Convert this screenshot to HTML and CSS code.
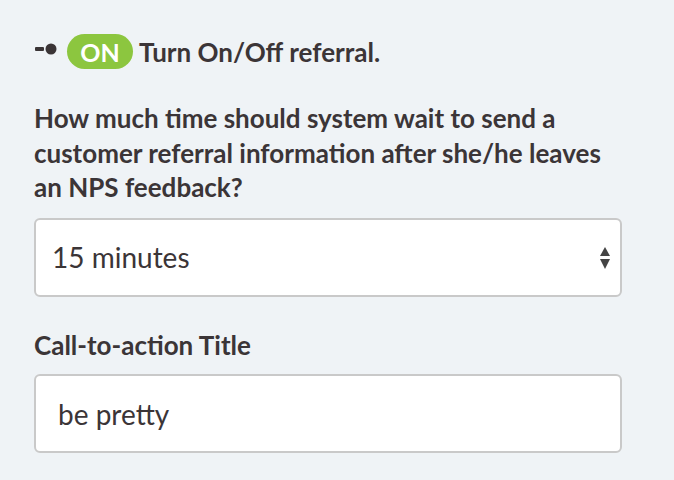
FILE: index.html
```html
<!DOCTYPE html>
<html lang="en">
<head>
    <meta charset="UTF-8">
    <meta name="viewport" content="width=device-width, initial-scale=1.0">
    <title>Referral Settings</title>
    <link rel="stylesheet" href="styles.css">
</head>
<body>
    <div class="settings">
        <div class="toggle-row">
            <svg class="toggle-icon" width="22" height="12" viewBox="0 0 22 12">
                <rect x="0" y="4" width="9" height="4" rx="1" fill="#3a3436"/>
                <circle cx="16" cy="6" r="5.5" fill="#3a3436"/>
            </svg>
            <span class="pill">ON</span>
            <span class="toggle-label">Turn On/Off referral.</span>
        </div>

        <label class="field-label" for="waitSelect">How much time should system wait to send a customer referral information after she/he leaves an NPS feedback?</label>
        <div class="select-wrap">
            <select id="waitSelect" class="field">
                <option>15 minutes</option>
                <option>30 minutes</option>
                <option>1 hour</option>
            </select>
            <span class="arrows">
                <svg width="10" height="22" viewBox="0 0 10 22">
                    <polygon points="5,0 10,9 0,9" fill="#444"/>
                    <polygon points="0,12 10,12 5,22" fill="#444"/>
                </svg>
            </span>
        </div>

        <label class="field-label title-label" for="ctaTitle">Call-to-action Title</label>
        <input type="text" id="ctaTitle" class="field" value="be pretty">
    </div>
</body>
</html>
```

FILE: styles.css
```css
body {
    margin: 0;
    background-color: #eff3f6;
    font-family: 'Lato', 'Open Sans', sans-serif;
    color: #3b3537;
}
.settings {
    width: 588px;
    padding: 34px 0 0 34px;
}
.toggle-row {
    display: flex;
    align-items: center;
    height: 35px;
}
.toggle-icon {
    margin-left: 1px;
    margin-right: 10px;
    margin-top: -6px;
}
.pill {
    display: inline-flex;
    align-items: center;
    justify-content: center;
    width: 66px;
    height: 35px;
    border-radius: 18px;
    background-color: #8cc63f;
    color: white;
    font-weight: bold;
    font-size: 25px;
}
.toggle-label {
    margin-left: 6px;
    font-weight: bold;
    font-size: 26px;
}
.field-label {
    display: block;
    margin-top: 32px;
    font-weight: bold;
    font-size: 26px;
    line-height: 34.5px;
}
.title-label {
    margin-top: 31px;
}
.select-wrap {
    position: relative;
    margin-top: 13px;
}
.field {
    display: block;
    box-sizing: border-box;
    width: 588px;
    height: 79px;
    margin: 0;
    background-color: white;
    border: 2px solid #c9c9c9;
    border-radius: 6px;
    font-family: 'Lato', 'Open Sans', sans-serif;
    font-size: 28px;
    color: #3b3537;
    outline: none;
}
select.field {
    -webkit-appearance: none;
    appearance: none;
    padding: 0 40px 0 16px;
}
input.field {
    margin-top: 12px;
    padding: 0 22px;
}
.arrows {
    position: absolute;
    right: 12px;
    top: 29px;
    line-height: 0;
    pointer-events: none;
}
```
